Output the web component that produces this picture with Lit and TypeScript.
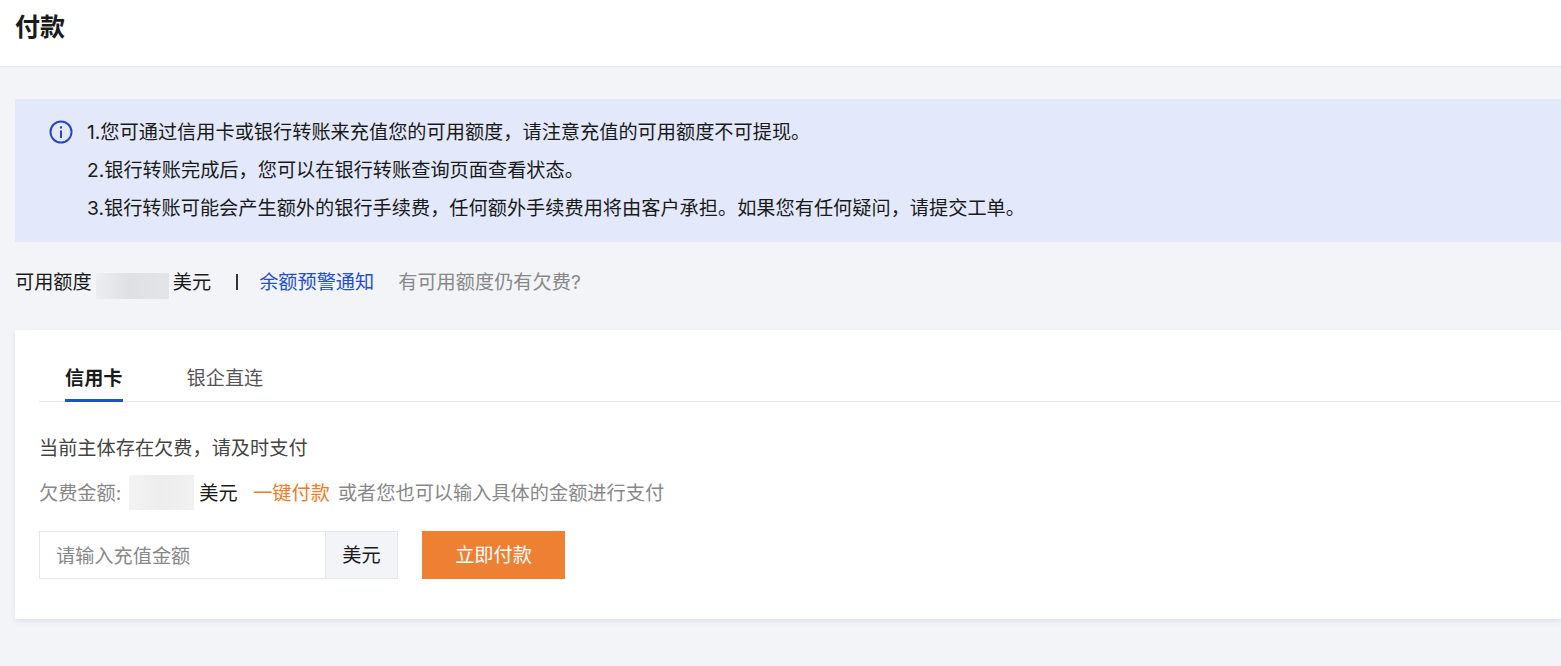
import { LitElement, html, css } from 'lit';
import { customElement, state } from 'lit/decorators.js';

@customElement('app-root')
export class AppRoot extends LitElement {
  @state() tabs = ['信用卡', '银企直连'];
  @state() activeTab = 0;
  @state() notices = [
    '1.您可通过信用卡或银行转账来充值您的可用额度，请注意充值的可用额度不可提现。',
    '2.银行转账完成后，您可以在银行转账查询页面查看状态。',
    '3.银行转账可能会产生额外的银行手续费，任何额外手续费用将由客户承担。如果您有任何疑问，请提交工单。',
  ];

  static styles = css`
    :host {
      display: block;
      min-height: 666px;
      background: #f2f4f8;
      font-family: Inter, "Noto Sans CJK SC", "Liberation Sans", sans-serif;
      font-size: 19.2px;
      color: #1a1a1a;
      overflow: hidden;
    }

    .header {
      height: 66px;
      box-sizing: content-box;
      background: #fff;
      border-bottom: 1px solid #e4e6eb;
      padding-left: 15px;
      font-size: 25px;
      font-weight: 700;
      line-height: 54px;
    }

    .main {
      padding: 32px 0 0 15px;
    }

    .alert {
      display: flex;
      gap: 14px;
      height: 143px;
      box-sizing: border-box;
      padding: 14px 0 15px 34px;
      background: #e3e9fb;
      white-space: nowrap;
    }

    .alert svg {
      flex: none;
      margin-top: 6.5px;
    }

    .alert p {
      margin: 0;
      line-height: 38px;
    }

    .balance {
      display: flex;
      align-items: flex-start;
      height: 30px;
      margin-top: 27px;
      line-height: 26px;
    }

    .balance .blur {
      flex: none;
      width: 73px;
      height: 26px;
      margin: 4px 4px 0 4px;
      background: linear-gradient(90deg, #eceef1, #dfe0e3 45%, #e3e4e7);
    }

    .sep {
      width: 2px;
      height: 16px;
      background: #333;
      margin: 5px 21px 0 25px;
    }

    .link {
      color: #1f4fd1;
    }

    .muted {
      color: #888;
    }

    .balance .muted {
      margin-left: 24px;
    }

    .card {
      height: 289px;
      box-sizing: border-box;
      margin-top: 31px;
      padding: 24px 0 0 24px;
      background: #fff;
      box-shadow: 0 2px 5px rgba(50, 60, 90, 0.1);
    }

    .tabs {
      display: flex;
      gap: 64px;
      height: 48px;
      box-sizing: border-box;
      padding-left: 26px;
      border-bottom: 1px solid #e4e6eb;
    }

    .tab {
      height: 48px;
      box-sizing: border-box;
      line-height: 48px;
      color: #555;
    }

    .tab.active {
      color: #1a1a1a;
      font-weight: 700;
      border-bottom: 3px solid #1f4fd1;
    }

    .debt-title {
      margin-top: 32px;
      line-height: 28px;
      color: #444;
    }

    .debt {
      display: flex;
      align-items: center;
      height: 35px;
      margin-top: 13px;
      white-space: nowrap;
    }

    .debt span {
      padding-bottom: 2px;
    }

    .debt .blur {
      flex: none;
      width: 65px;
      height: 35px;
      margin: 0 5px 0 8px;
      background: linear-gradient(90deg, #f3f3f4, #ededee 50%, #f1f1f2);
    }

    .pay-all {
      color: #ef7b27;
      margin: 0 8px 0 15.5px;
    }

    .form {
      display: flex;
      margin-top: 21px;
    }

    .field {
      display: flex;
      width: 359px;
      height: 48px;
      box-sizing: border-box;
      border: 1px solid #e4e6eb;
    }

    .field input {
      flex: 1;
      min-width: 0;
      border: 0;
      outline: 0;
      padding: 2px 0 0 16px;
      font: inherit;
      color: inherit;
    }

    .field input::placeholder {
      color: #888;
      opacity: 1;
    }

    .unit {
      flex: none;
      width: 72px;
      box-sizing: border-box;
      text-align: center;
      line-height: 46px;
      background: #f2f4f8;
      border-left: 1px solid #e4e6eb;
    }

    .pay {
      width: 143px;
      height: 48px;
      margin-left: 24px;
      padding: 0 0 2px;
      border: 0;
      background: #ee8033;
      color: #fff;
      font: inherit;
    }
  `;

  render() {
    return html`
      <div class="header">付款</div>
      <div class="main">
        <div class="alert">
          <svg width="24" height="24" viewBox="0 0 24 24" fill="none" stroke="#2748c4">
            <circle cx="12" cy="12" r="10.5" stroke-width="2"></circle>
            <path d="M12 10.5V18" stroke-width="2"></path>
            <path d="M12 6.2V8.4" stroke-width="2"></path>
          </svg>
          <div>${this.notices.map((n) => html`<p>${n}</p>`)}</div>
        </div>
        <div class="balance">
          <span>可用额度</span>
          <div class="blur"></div>
          <span>美元</span>
          <span class="sep"></span>
          <span class="link">余额预警通知</span>
          <span class="muted">有可用额度仍有欠费?</span>
        </div>
        <div class="card">
          <div class="tabs">
            ${this.tabs.map(
              (t, i) => html`<div class="tab ${i === this.activeTab ? 'active' : ''}">${t}</div>`
            )}
          </div>
          <div class="debt-title">当前主体存在欠费，请及时支付</div>
          <div class="debt">
            <span class="muted">欠费金额:</span>
            <div class="blur"></div>
            <span>美元</span>
            <span class="pay-all">一键付款</span>
            <span class="muted">或者您也可以输入具体的金额进行支付</span>
          </div>
          <div class="form">
            <div class="field">
              <input placeholder="请输入充值金额" />
              <div class="unit">美元</div>
            </div>
            <button class="pay">立即付款</button>
          </div>
        </div>
      </div>
    `;
  }
}
